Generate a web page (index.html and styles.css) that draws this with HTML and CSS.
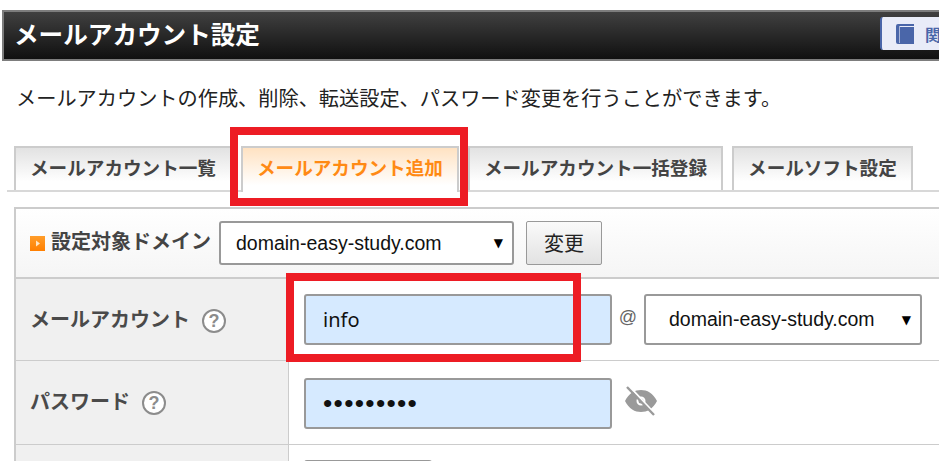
FILE: index.html
```html
<!DOCTYPE html>
<html lang="ja">
<head>
<meta charset="utf-8">
<title>メールアカウント設定</title>
<link rel="stylesheet" href="styles.css">
</head>
<body>
<div class="page">
  <header class="head">
    <h1 class="head-title">メールアカウント設定</h1>
    <a class="manual">
      <svg class="book" viewBox="0 0 18 20" width="18" height="20" aria-hidden="true">
        <path d="M2 0h16v2H4v1h14v17H2a2 2 0 0 1-2-2V2a2 2 0 0 1 2-2z" fill="#4a66a9"/>
        <path d="M3 2h1v17H3z" fill="#a9b6d8"/>
      </svg>
      <span>関連マニュアル</span>
    </a>
  </header>

  <p class="lead">メールアカウントの作成、削除、転送設定、パスワード変更を行うことができます。</p>

  <ul class="tabs">
    <li class="tab">メールアカウント一覧</li>
    <li class="tab tab-active">メールアカウント追加</li>
    <li class="tab">メールアカウント一括登録</li>
    <li class="tab">メールソフト設定</li>
  </ul>

  <section class="panel">
    <div class="domain-row">
      <span class="marker"><svg viewBox="0 0 15 15" width="15" height="15" aria-hidden="true"><path d="M6 4.5l4 3-4 3z" fill="#ffe6c4"/></svg></span>
      <span class="domain-label">設定対象ドメイン</span>
      <div class="select select-a"><span>domain-easy-study.com</span><i class="arrow">▼</i></div>
      <button class="change" type="button">変更</button>
    </div>

    <div class="row row-first">
      <div class="label"><span>メールアカウント</span><span class="help">?</span></div>
      <div class="field">
        <input class="text" type="text" value="info">
        <span class="at">@</span>
        <div class="select select-b"><span>domain-easy-study.com</span><i class="arrow">▼</i></div>
      </div>
    </div>

    <div class="row row-second">
      <div class="label"><span>パスワード</span><span class="help">?</span></div>
      <div class="field">
        <input class="text pass" type="password" value="123456789">
        <svg class="eye" viewBox="0 0 34 30" width="34" height="30" aria-hidden="true">
          <path fill-rule="evenodd" d="M1 15C5 7 11 4 17 4s12 3 16 11c-4 8-10 11-16 11S5 23 1 15zm16-4.500a4.500 4.500 0 1 0 0 9 4.500 4.500 0 0 0 0-9z" fill="#9a9a9a"/>
          <circle cx="17" cy="15" r="2.500" fill="#9a9a9a"/>
          <path d="M5 0l26 28" stroke="#fff" stroke-width="2"/>
          <path d="M3 1l27 28" stroke="#9a9a9a" stroke-width="2.400"/>
        </svg>
      </div>
    </div>

    <div class="row row-third">
      <div class="label"></div>
      <div class="field"><div class="stub"></div></div>
    </div>
  </section>

  <div class="callout callout-tab"></div>
  <div class="callout callout-input"></div>
</div>
</body>
</html>
```

FILE: styles.css
```css
* { box-sizing: border-box; }
html, body { margin: 0; padding: 0; height: 461px; overflow: hidden; background: #fff; }
body { font-family: "Liberation Sans", "Noto Sans CJK JP", sans-serif; color: #222; }

.page { position: relative; width: 1100px; padding-top: 10px; }

.head {
  margin-left: 2px; height: 51px;
  display: flex; align-items: center;
  padding-left: 10px;
  border: 2px solid #7d7d7d; border-right: 0;
  background: linear-gradient(#404040, #101010);
}
.head-title {
  margin: 0 0 4px; width: 866px;
  font: 700 24.6px/1 "Noto Sans CJK JP", sans-serif;
  color: #fff;
}
.manual {
  display: flex; align-items: center; gap: 11px;
  height: 33px; margin-top: -4px; padding-left: 14px; width: 200px;
  background: #e9ecf8; border-left: 2px solid #4a66a9; border-radius: 3px;
  color: #4a66a9; font: 700 16px/1 "Noto Sans CJK JP", sans-serif;
}
.book { flex: none; }

.lead {
  margin: 0; padding: 24px 0 0 16px; height: 85px;
  font: 400 20.2px/1.3 "Noto Sans CJK JP", sans-serif; color: #222; white-space: nowrap;
}

.tabs {
  list-style: none; margin: 0 0 0 7px; padding: 0 0 0 7px;
  display: flex; align-items: flex-start; gap: 9px; height: 46px;
  border-bottom: 2px solid #d8d8d8;
}
.tab {
  height: 44px; padding: 0 14px 4px;
  display: flex; align-items: center;
  border: 2px solid #ccc; border-bottom: 0;
  background: linear-gradient(#e2e2e2, #fff 80%);
  font: 700 18.6px/1 "Noto Sans CJK JP", sans-serif; color: #444;
}
.tab-active { height: 46px; padding-bottom: 6px; background: linear-gradient(#ffe2c2, #fff 85%); color: #ff8a14; }

.panel { margin: 15px 0 0 14px; border: 2px solid #ccc; border-right: 0; border-bottom: 0; }

.domain-row {
  height: 70px; padding: 12px 0 0 14px;
  display: flex; align-items: flex-start;
  background: linear-gradient(#fff, #f5f5f5);
  border-bottom: 2px solid #ccc;
}
.marker {
  flex: none; width: 15px; height: 15px; margin: 15px 6px 0 0;
  background: linear-gradient(#ff9d2a, #ff7f00);
}
.marker svg { display: block; }
.domain-label {
  width: 168px; height: 44px; padding-bottom: 4px; display: flex; align-items: center;
  font: 700 20px/1 "Noto Sans CJK JP", sans-serif; color: #444; white-space: nowrap;
}
.select {
  display: flex; align-items: center; justify-content: space-between;
  background: #fff; border: 2px solid #999; border-radius: 3px;
  font-size: 19.5px; color: #111;
}
.select-a { width: 295px; height: 44px; padding: 0 9px 0 15px; }
.select-b { width: 278px; height: 51px; padding: 0 9px 0 23px; }
.arrow { font: normal 12px/1 "DejaVu Sans", sans-serif; color: #000; }
.change {
  margin-left: 12px; width: 76px; height: 44px; padding: 0;
  border: 1px solid #999; border-radius: 2px;
  background: linear-gradient(#fafafa, #e2e2e2);
  font: 400 20px/1 "Noto Sans CJK JP", sans-serif; color: #222;
}

.row { display: flex; border-bottom: 1px solid #ccc; }
.row-first { height: 82px; }
.row-second { height: 84px; }
.row-third { height: 60px; border-bottom: 0; }
.label {
  flex: none; width: 273px; padding-left: 14px;
  display: flex; align-items: center; gap: 12px;
  background: #f0f0f0; border-right: 1px solid #ccc;
  font: 700 20px/1 "Noto Sans CJK JP", sans-serif; color: #4a4a4a;
}
.row-first .label { padding-bottom: 2px; }
.row-second .label { padding-bottom: 3px; }
.help {
  flex: none; width: 24px; height: 24px; margin-top: 4px; border-radius: 50%;
  border: 2px solid #8c8c8c; background: #fff;
  display: flex; align-items: center; justify-content: center;
  font: 700 18px/1 "Liberation Sans", sans-serif; color: #8c8c8c;
}
.field { display: flex; align-items: flex-start; padding-left: 15px; }
.row-first .field { padding-top: 15px; }
.row-second .field { padding-top: 17px; }
.row-third .field { padding-top: 15px; }
.text {
  width: 308px; height: 51px; padding: 0 17px;
  background: #d6eaff; border: 2px solid #999; border-radius: 3px;
  font: 400 20px "Noto Sans", "Liberation Sans", sans-serif; color: #111; outline: 0;
}
.pass { font-family: "Liberation Sans", sans-serif; font-size: 26.500px; letter-spacing: 1.300px; }
.at { width: 32px; height: 46px; display: flex; align-items: center; justify-content: center; font-size: 18px; color: #666; }
.eye { margin: 8px 0 0 12px; filter: blur(0.6px); }
.stub { width: 128px; height: 30px; border: 2px solid #999; border-bottom: 0; border-radius: 3px 3px 0 0; }

.callout { position: absolute; border: 8px solid #ed1c24; pointer-events: none; }
.callout-tab { left: 230px; top: 127px; width: 238px; height: 79px; }
.callout-input { left: 286px; top: 273px; width: 295px; height: 89px; }
```
